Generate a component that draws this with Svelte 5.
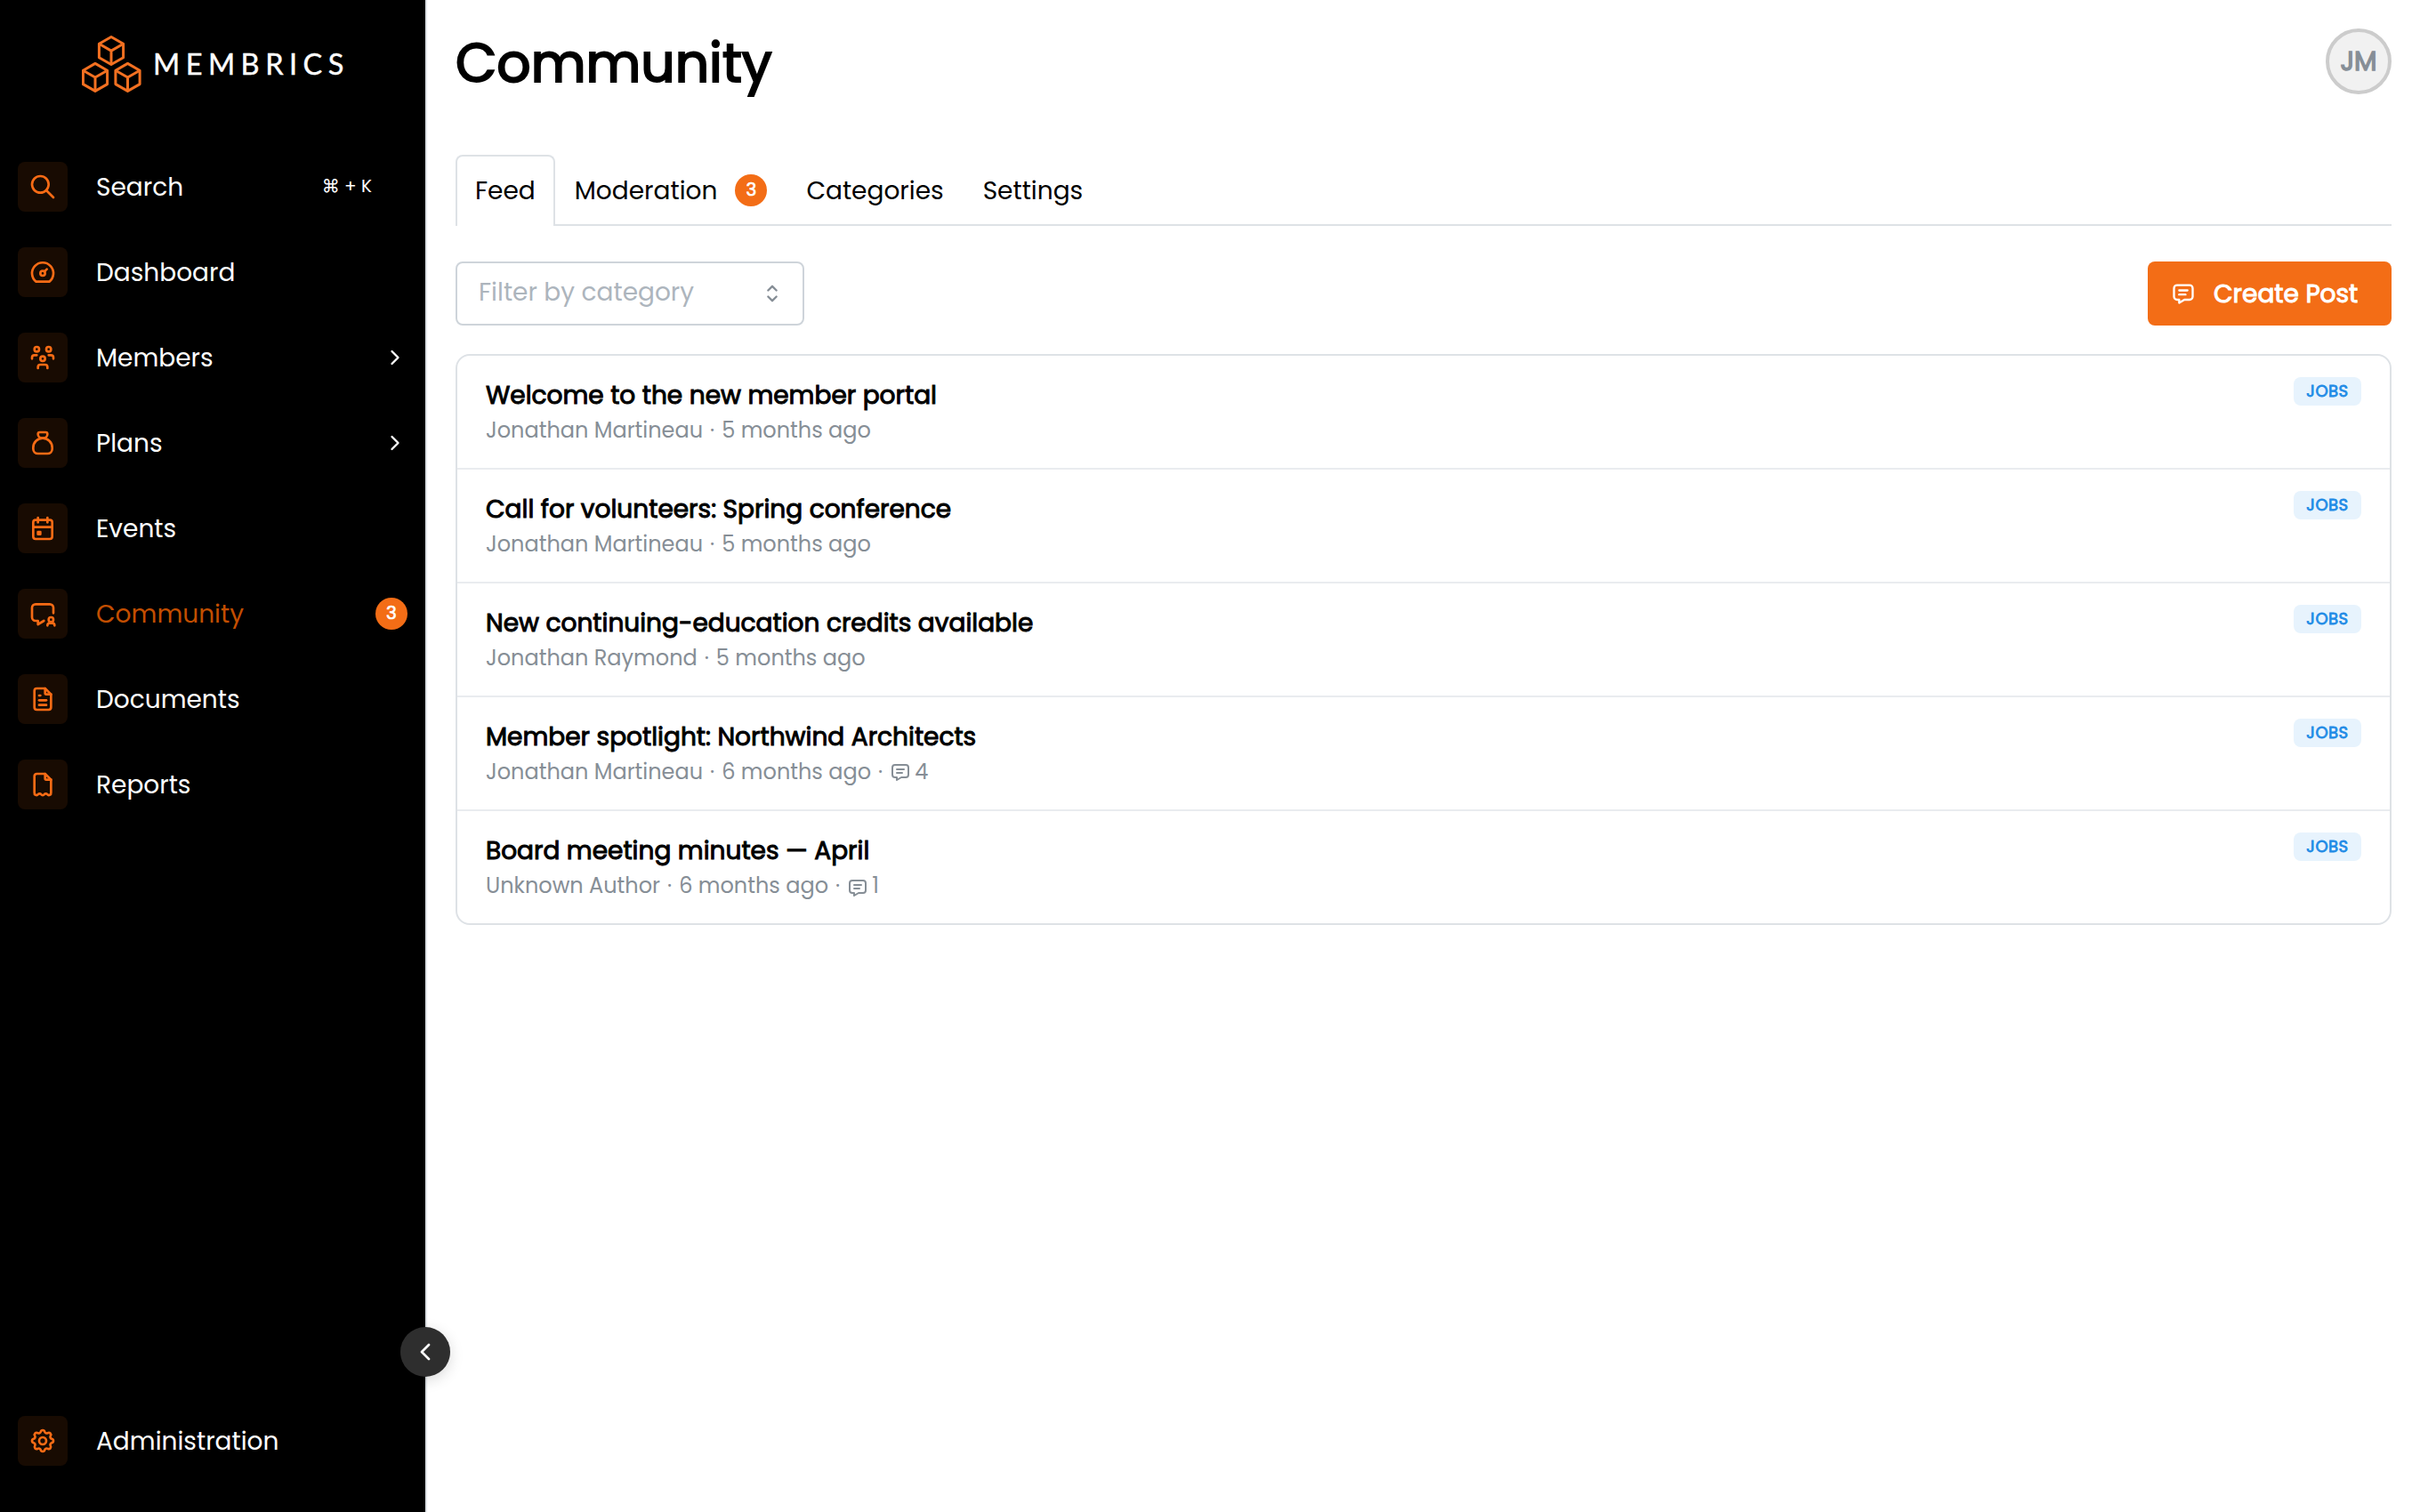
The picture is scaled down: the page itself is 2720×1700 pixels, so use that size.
<script lang="ts">
  const fold = "M14 3v4a1 1 0 0 0 1 1h4";
  const message = [
    "M8 9h8",
    "M8 13h6",
    "M18 4a3 3 0 0 1 3 3v8a3 3 0 0 1 -3 3h-5l-5 3v-3h-2a3 3 0 0 1 -3 -3v-8a3 3 0 0 1 3 -3h12z",
  ];

  type NavItem = {
    label: string;
    icon: string[];
    shortcut?: string;
    children?: boolean;
    active?: boolean;
    count?: number;
  };

  const navItems: NavItem[] = [
    {
      label: "Search",
      icon: ["M3 10a7 7 0 1 0 14 0a7 7 0 1 0 -14 0", "M21 21l-6 -6"],
      shortcut: "⌘ + K",
    },
    {
      label: "Dashboard",
      icon: [
        "M10 13a2 2 0 1 0 4 0a2 2 0 1 0 -4 0",
        "M13.45 11.55l2.05 -2.05",
        "M6.4 20a9 9 0 1 1 11.2 0z",
      ],
    },
    {
      label: "Members",
      icon: [
        "M10 13a2 2 0 1 0 4 0a2 2 0 0 0 -4 0",
        "M8 21v-1a2 2 0 0 1 2 -2h4a2 2 0 0 1 2 2v1",
        "M15 5a2 2 0 1 0 4 0a2 2 0 0 0 -4 0",
        "M17 10h2a2 2 0 0 1 2 2v1",
        "M5 5a2 2 0 1 0 4 0a2 2 0 0 0 -4 0",
        "M3 13v-1a2 2 0 0 1 2 -2h2",
      ],
      children: true,
    },
    {
      label: "Plans",
      icon: [
        "M9.5 3h5a1.5 1.5 0 0 1 1.5 1.5a3.5 3.5 0 0 1 -3.5 3.5h-1a3.5 3.5 0 0 1 -3.5 -3.5a1.5 1.5 0 0 1 1.5 -1.5z",
        "M4 17v-1a8 8 0 1 1 16 0v1a4 4 0 0 1 -4 4h-8a4 4 0 0 1 -4 -4z",
      ],
      children: true,
    },
    {
      label: "Events",
      icon: [
        "M4 7a2 2 0 0 1 2 -2h12a2 2 0 0 1 2 2v12a2 2 0 0 1 -2 2h-12a2 2 0 0 1 -2 -2z",
        "M16 3v4",
        "M8 3v4",
        "M4 11h16",
        "M8 15h2v2h-2z",
      ],
    },
    {
      label: "Community",
      icon: [
        "M13 18l-5 3v-3h-2a3 3 0 0 1 -3 -3v-8a3 3 0 0 1 3 -3h12a3 3 0 0 1 3 3v4.5",
        "M17 17a2 2 0 1 0 4 0a2 2 0 1 0 -4 0",
        "M22 22a2 2 0 0 0 -2 -2h-2a2 2 0 0 0 -2 2",
      ],
      active: true,
      count: 3,
    },
    {
      label: "Documents",
      icon: [
        fold,
        "M17 21h-10a2 2 0 0 1 -2 -2v-14a2 2 0 0 1 2 -2h7l5 5v11a2 2 0 0 1 -2 2z",
        "M9 9h1",
        "M9 13h6",
        "M9 17h6",
      ],
    },
    {
      label: "Reports",
      icon: [
        fold,
        "M19 8v11a1.78 1.78 0 0 1 -3.1 1.4a1.65 1.65 0 0 0 -2.6 0a1.65 1.65 0 0 1 -2.6 0a1.65 1.65 0 0 0 -2.6 0a1.78 1.78 0 0 1 -3.1 -1.4v-14a2 2 0 0 1 2 -2h7l5 5",
      ],
    },
  ];

  const adminItem: NavItem = {
    label: "Administration",
    icon: [
      "M10.325 4.317c.426 -1.756 2.924 -1.756 3.35 0a1.724 1.724 0 0 0 2.573 1.066c1.543 -.94 3.31 .826 2.37 2.37a1.724 1.724 0 0 0 1.065 2.572c1.756 .426 1.756 2.924 0 3.35a1.724 1.724 0 0 0 -1.066 2.573c.94 1.543 -.826 3.31 -2.37 2.37a1.724 1.724 0 0 0 -2.572 1.065c-.426 1.756 -2.924 1.756 -3.35 0a1.724 1.724 0 0 0 -2.573 -1.066c-1.543 .94 -3.31 -.826 -2.37 -2.37a1.724 1.724 0 0 0 -1.065 -2.572c-1.756 -.426 -1.756 -2.924 0 -3.35a1.724 1.724 0 0 0 1.066 -2.573c-.94 -1.543 .826 -3.31 2.37 -2.37c1 .608 2.296 .07 2.572 -1.065z",
      "M9 12a3 3 0 1 0 6 0a3 3 0 0 0 -6 0",
    ],
  };

  const tabs = [
    { label: "Feed" },
    { label: "Moderation", count: 3 },
    { label: "Categories" },
    { label: "Settings" },
  ];

  const posts = [
    {
      title: "Welcome to the new member portal",
      author: "Jonathan Martineau",
      age: "5 months ago",
      comments: 0,
    },
    {
      title: "Call for volunteers: Spring conference",
      author: "Jonathan Martineau",
      age: "5 months ago",
      comments: 0,
    },
    {
      title: "New continuing-education credits available",
      author: "Jonathan Raymond",
      age: "5 months ago",
      comments: 0,
    },
    {
      title: "Member spotlight: Northwind Architects",
      author: "Jonathan Martineau",
      age: "6 months ago",
      comments: 4,
    },
    {
      title: "Board meeting minutes — April",
      author: "Unknown Author",
      age: "6 months ago",
      comments: 1,
    },
  ];

  let activeTab = "Feed";
</script>

{#snippet icon(paths: string[], kind: string)}
  <svg class="icon {kind}" viewBox="0 0 24 24" aria-hidden="true">
    {#each paths as d}
      <path {d} />
    {/each}
  </svg>
{/snippet}

{#snippet navLink(item: NavItem)}
  <a class="nav-link" class:active={item.active} href="#{item.label.toLowerCase()}">
    <span class="nav-icon">{@render icon(item.icon, "icon-nav")}</span>
    <span class="nav-label">{item.label}</span>
    {#if item.shortcut}
      <span class="shortcut">{item.shortcut}</span>
    {/if}
    {#if item.children}
      {@render icon(["M9 6l6 6l-6 6"], "icon-chevron")}
    {/if}
    {#if item.count}
      <span class="count">{item.count}</span>
    {/if}
  </a>
{/snippet}

<div class="app">
  <aside class="sidebar">
    <div class="logo">
      <svg class="logo-mark" viewBox="0 0 68 66" aria-hidden="true">
        {#each [[33, 2.5], [15, 32.4], [51.5, 32.4]] as [x, y]}
          <g transform="translate({x} {y})">
            <path d="M0 0L13.6 7.8V23.2L0 31L-13.6 23.2V7.8Z" />
            <path d="M-13.6 7.8L0 15.6L13.6 7.8M0 15.6V31" />
          </g>
        {/each}
      </svg>
      <span class="logo-text">MEMBRICS</span>
    </div>
    <nav>
      {#each navItems as item}
        {@render navLink(item)}
      {/each}
    </nav>
    <div class="sidebar-footer">
      {@render navLink(adminItem)}
    </div>
    <button class="collapse" aria-label="Collapse menu">
      {@render icon(["M15 6l-6 6l6 6"], "icon-collapse")}
    </button>
  </aside>

  <main>
    <header>
      <h1>Community</h1>
      <div class="avatar">JM</div>
    </header>

    <div class="tabs" role="tablist">
      {#each tabs as tab}
        <button
          class="tab"
          class:selected={tab.label === activeTab}
          role="tab"
          aria-selected={tab.label === activeTab}
          on:click={() => (activeTab = tab.label)}
        >
          <span>{tab.label}</span>
          {#if tab.count}
            <span class="count">{tab.count}</span>
          {/if}
        </button>
      {/each}
    </div>

    <div class="toolbar">
      <div class="select">
        <span class="placeholder">Filter by category</span>
        {@render icon(["M8 9l4 -4l4 4", "M16 15l-4 4l-4 -4"], "icon-select")}
      </div>
      <button class="create">
        {@render icon(message, "icon-button")}
        <span class="create-label">Create Post</span>
      </button>
    </div>

    <ul class="posts">
      {#each posts as post}
        <li class="post">
          <div>
            <h2>{post.title}</h2>
            <p class="meta">
              <span>{post.author}</span>
              <span class="dot">·</span>
              <span>{post.age}</span>
              {#if post.comments}
                <span class="dot">·</span>
                {@render icon(message, "icon-comment")}
                <span>{post.comments}</span>
              {/if}
            </p>
          </div>
          <span class="category">JOBS</span>
        </li>
      {/each}
    </ul>
  </main>
</div>

<style>
  :global(body) {
    margin: 0;
    background: #fff;
  }

  .app {
    display: flex;
    height: 1700px;
    font-family: Poppins, Inter, "Liberation Sans", sans-serif;
    font-size: 28px;
    color: #000;
  }

  button {
    margin: 0;
    padding: 0;
    border: none;
    background: none;
    font: inherit;
    color: inherit;
  }

  /* Heavier text keeps the widths of the regular cut */
  h1,
  h2,
  .avatar,
  .count,
  .category,
  .create-label {
    font-weight: 400;
    -webkit-text-stroke: 0.035em currentColor;
  }

  .icon {
    flex: none;
    fill: none;
    stroke: currentColor;
    stroke-width: 2;
    stroke-linecap: round;
    stroke-linejoin: round;
  }

  /* Sidebar */

  .sidebar {
    position: relative;
    box-sizing: border-box;
    display: flex;
    flex-direction: column;
    flex: none;
    width: 480px;
    padding: 39px 20px 52px;
    border-right: 2px solid #dee2e6;
    background: #000;
    color: #fff;
  }

  .logo {
    display: flex;
    align-items: center;
    height: 66px;
    margin-bottom: 77px;
    padding-left: 72px;
  }

  .logo-mark {
    width: 68px;
    height: 66px;
    fill: none;
    stroke: #f37021;
    stroke-width: 3;
    stroke-linejoin: round;
  }

  .logo-text {
    margin: -1px 0 0 12px;
    font-family: Lato, sans-serif;
    font-size: 32.5px;
    letter-spacing: 6.5px;
    -webkit-text-stroke: 0.4px currentColor;
  }

  nav {
    display: flex;
    flex-direction: column;
    gap: 40px;
    flex: 1;
  }

  .nav-link {
    display: flex;
    align-items: center;
    height: 56px;
    color: #fff;
    text-decoration: none;
  }

  .nav-link.active .nav-label {
    color: #c24e00;
  }

  .nav-icon {
    display: flex;
    align-items: center;
    justify-content: center;
    width: 56px;
    height: 56px;
    border-radius: 8px;
    background: #180b02;
    color: #f76b15;
  }

  .nav-label {
    flex: 1;
    margin-left: 32px;
    padding-top: 2px;
  }

  .icon-nav {
    width: 32px;
    height: 32px;
  }

  .icon-chevron {
    width: 28px;
    height: 28px;
  }

  .shortcut {
    margin-right: 40px;
    padding-bottom: 2px;
    font-size: 20px;
  }

  .count {
    box-sizing: border-box;
    display: flex;
    align-items: center;
    justify-content: center;
    width: 36px;
    height: 36px;
    padding-bottom: 2px;
    border-radius: 50%;
    background: #f36d16;
    color: #fff;
    font-size: 20px;
  }

  .collapse {
    position: absolute;
    right: -28px;
    bottom: 152px;
    display: flex;
    align-items: center;
    justify-content: center;
    width: 56px;
    height: 56px;
    border-radius: 50%;
    background: #2e2e2e;
    color: #fff;
    box-shadow: 0 4px 16px rgba(0, 0, 0, 0.15);
  }

  .icon-collapse {
    width: 32px;
    height: 32px;
  }

  /* Main column */

  main {
    flex: 1;
    padding: 32px;
  }

  header {
    display: flex;
    justify-content: space-between;
    height: 142px;
  }

  h1 {
    margin: 0;
    font-size: 60px;
    line-height: 78px;
  }

  .avatar {
    box-sizing: border-box;
    display: flex;
    align-items: center;
    justify-content: center;
    width: 74px;
    height: 74px;
    border: 4px solid #ccc;
    border-radius: 50%;
    background: #f1f1f1;
    color: #868e96;
    font-size: 29.6px;
    -webkit-text-stroke-width: 0.045em;
  }

  .tabs {
    display: flex;
    height: 78px;
    margin-bottom: 40px;
    border-bottom: 2px solid #dee2e6;
  }

  .tab {
    box-sizing: border-box;
    display: flex;
    align-items: center;
    gap: 20px;
    height: 80px;
    padding: 0 20px;
    border: 2px solid transparent;
    border-bottom: none;
    border-radius: 8px 8px 0 0;
  }

  .tab.selected {
    border-color: #dee2e6;
    background: #fff;
  }

  .tab .count {
    margin-bottom: 2px;
  }

  .toolbar {
    display: flex;
    justify-content: space-between;
    margin-bottom: 32px;
  }

  .select {
    box-sizing: border-box;
    display: flex;
    align-items: center;
    justify-content: space-between;
    width: 392px;
    height: 72px;
    padding: 0 20px 0 24px;
    border: 2px solid #ced4da;
    border-radius: 8px;
    color: #adb5bd;
  }

  .placeholder {
    padding-bottom: 2px;
  }

  .icon-select {
    width: 28px;
    height: 28px;
    color: #868e96;
  }

  .create {
    display: flex;
    align-items: center;
    gap: 20px;
    width: 274px;
    height: 72px;
    padding-left: 26px;
    border-radius: 8px;
    background: #f36d16;
    color: #fff;
  }

  .create-label {
    padding-top: 2px;
  }

  .icon-button {
    width: 28px;
    height: 28px;
  }

  /* Posts */

  .posts {
    margin: 0;
    padding: 0;
    border: 2px solid #dee2e6;
    border-radius: 16px;
    list-style: none;
  }

  .post {
    box-sizing: border-box;
    display: flex;
    justify-content: space-between;
    height: 128px;
    padding: 24px 32px 0;
    border-bottom: 2px solid #e9ecef;
  }

  .post:last-child {
    height: 126px;
    border-bottom: none;
  }

  h2 {
    margin: 0;
    font-size: 28px;
    line-height: 42px;
  }

  .meta {
    display: flex;
    align-items: center;
    margin: 0;
    color: #868e96;
    font-size: 24px;
    line-height: 36px;
  }

  .dot {
    margin: 0 8px;
  }

  .icon-comment {
    width: 24px;
    height: 24px;
    margin: 0 4px 0 0;
  }

  .post:last-child .icon-comment {
    margin-top: 4px;
  }

  .category {
    box-sizing: border-box;
    display: flex;
    align-items: center;
    justify-content: center;
    width: 76px;
    height: 32px;
    padding-bottom: 1px;
    border-radius: 8px;
    background: #e7f3fd;
    color: #228be6;
    font-size: 18px;
    letter-spacing: 0.5px;
    -webkit-text-stroke-width: 0.045em;
  }
</style>
